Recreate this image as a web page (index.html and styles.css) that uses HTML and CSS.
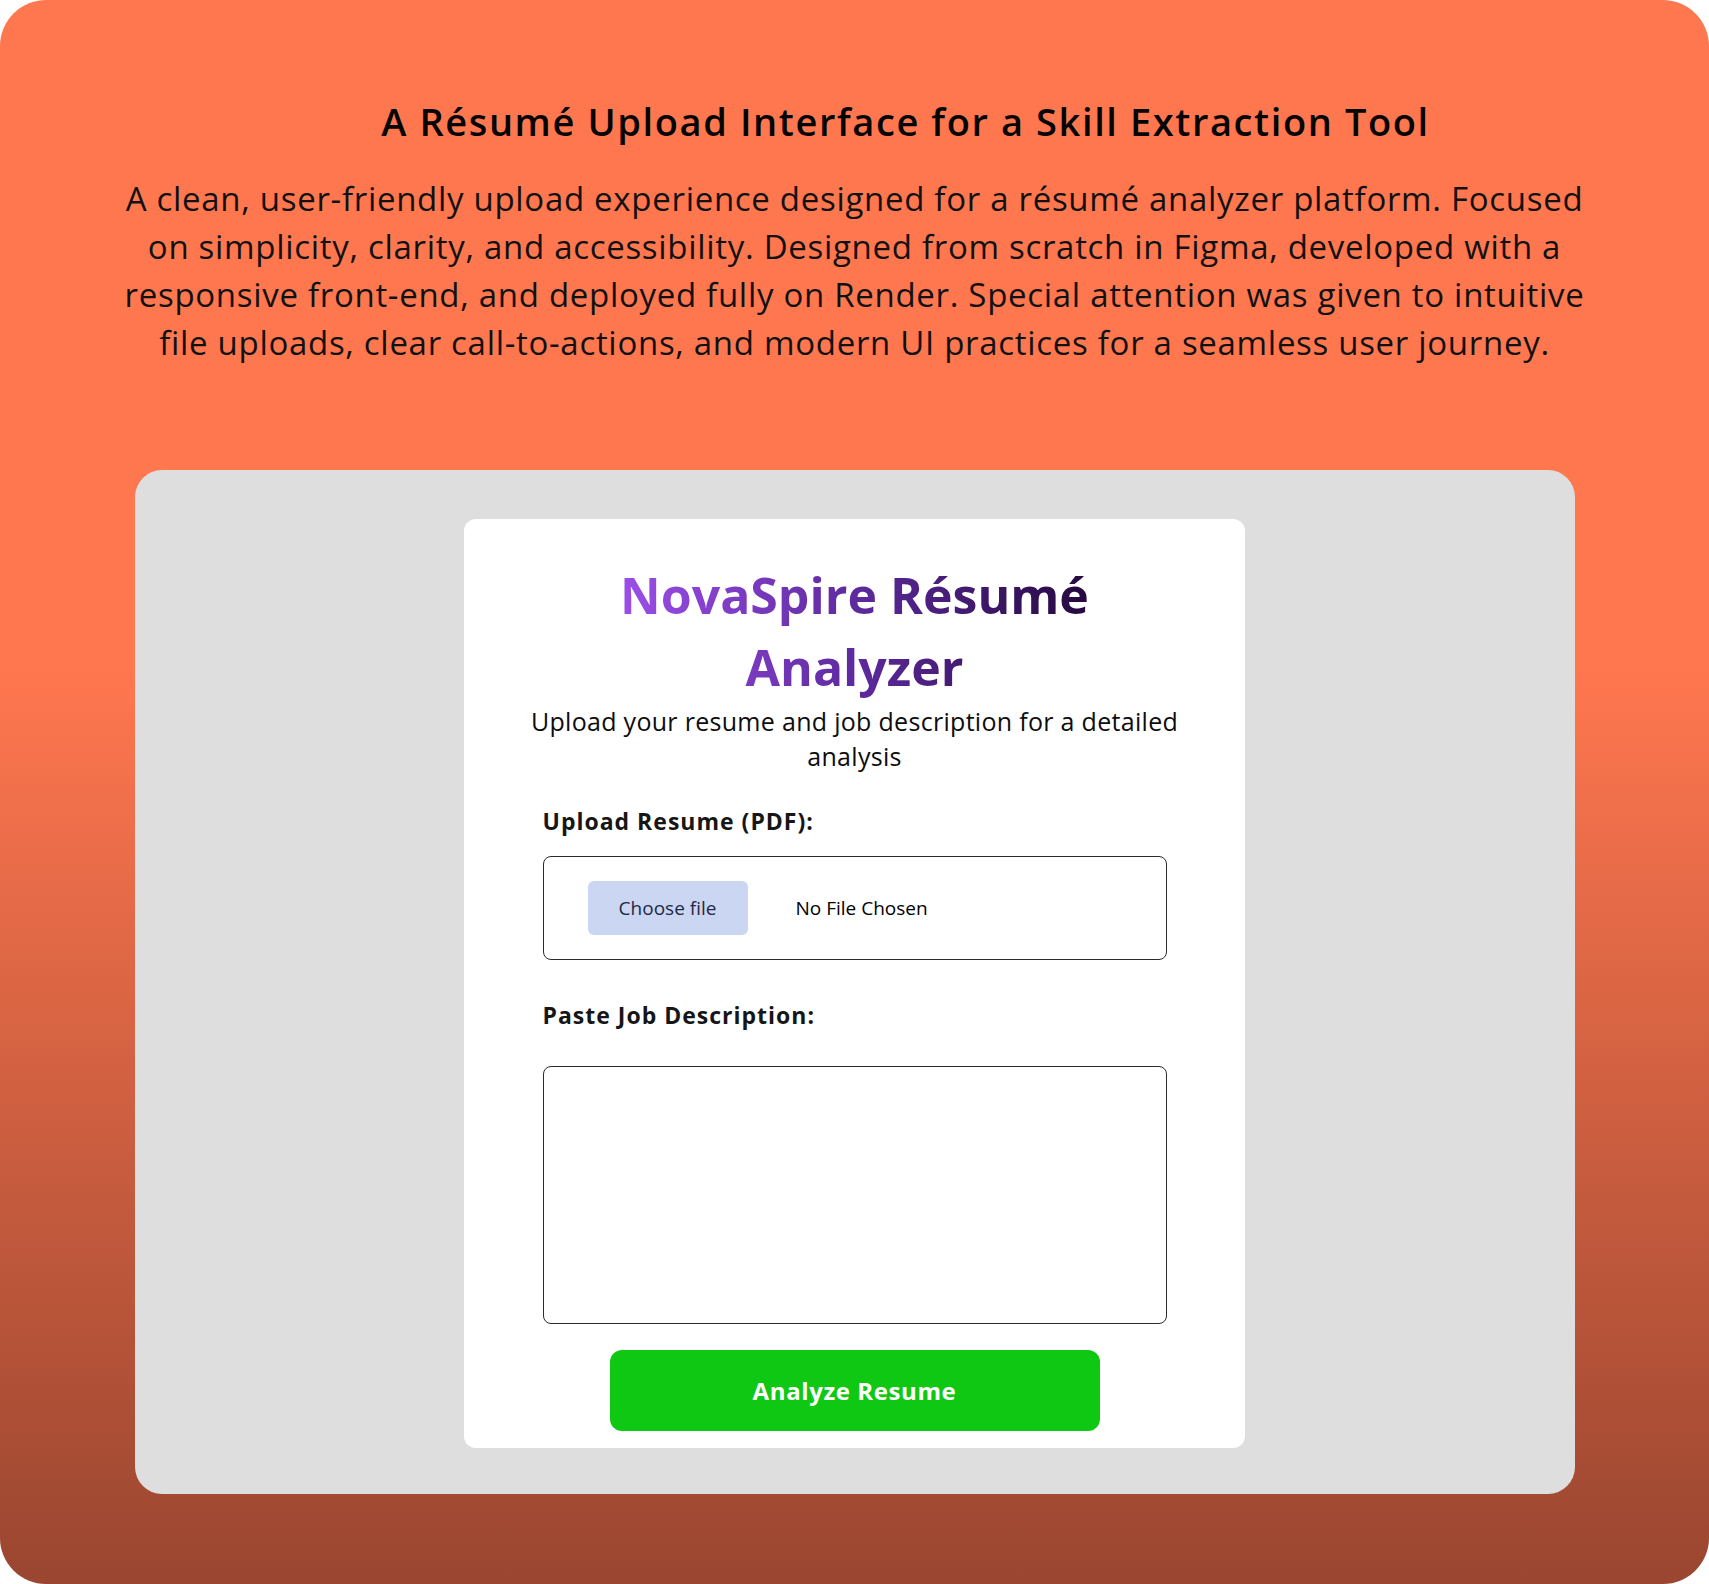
FILE: index.html
```html
<!DOCTYPE html>
<html lang="en">
<head>
<meta charset="utf-8">
<title>A Résumé Upload Interface for a Skill Extraction Tool</title>
<link rel="stylesheet" href="styles.css">
</head>
<body>
<main class="frame">
  <header class="intro">
    <h1 class="intro-title">A Résumé Upload Interface for a Skill Extraction Tool</h1>
    <p class="intro-text">A clean, user-friendly upload experience designed for a résumé analyzer platform. Focused<br>on simplicity, clarity, and accessibility. Designed from scratch in Figma, developed with a<br>responsive front-end, and deployed fully on Render. Special attention was given to intuitive<br>file uploads, clear call-to-actions, and modern UI practices for a seamless user journey.</p>
  </header>

  <section class="stage">
    <div class="card">
      <div class="card-head">
        <h2 class="brand">NovaSpire Résumé Analyzer</h2>
        <p class="lead">Upload your resume and job description for a detailed analysis</p>
      </div>

      <form class="form">
        <label class="field-label" for="resume">Upload Resume (PDF):</label>
        <div class="file-box">
          <span class="file-btn">Choose file</span>
          <span class="file-name">No File Chosen</span>
        </div>

        <label class="field-label field-label-jd" for="jd">Paste Job Description:</label>
        <textarea class="jd" id="jd"></textarea>

        <button type="button" class="submit">Analyze Resume</button>
      </form>
    </div>
  </section>
</main>
</body>
</html>
```

FILE: styles.css
```css
* { box-sizing: border-box; }

html, body {
  margin: 0;
  padding: 0;
  background: #ffffff;
}

body {
  font-family: "Open Sans", "DejaVu Sans", sans-serif;
  color: #111111;
}

.frame {
  width: 1709px;
  height: 1584px;
  border-radius: 46px;
  background: linear-gradient(to bottom, #ff774f 0%, #ff774f 42%, #9a4630 100%);
  padding-top: 94px;
  overflow: hidden;
}

.intro {
  text-align: center;
}

.intro-title {
  margin: 0;
  padding-left: 102px;
  font-size: 38px;
  line-height: 54px;
  font-weight: 600;
  letter-spacing: 1.6px;
  color: #050505;
}

.intro-text {
  margin: 27px 0 0;
  font-size: 33px;
  line-height: 48px;
  font-weight: 400;
  letter-spacing: 0.7px;
  color: #111111;
}

.stage {
  width: 1440px;
  margin: 103px auto 0;
  background: #dedede;
  border-radius: 27px;
  padding: 49px 0 46px;
}

.card {
  width: 781px;
  margin: 0 auto;
  background: #ffffff;
  border-radius: 12px;
  padding: 40px 0 17px;
}

.card-head {
  text-align: center;
  padding: 0 40px;
}

.brand {
  display: inline-block;
  width: 480px;
  margin: 0;
  font-size: 50px;
  line-height: 72px;
  font-weight: 700;
  background: linear-gradient(90deg, #9d4fea 0%, #5e2a9e 50%, #23083c 100%);
  -webkit-background-clip: text;
  background-clip: text;
  color: transparent;
}

.lead {
  margin: 1px 0 0;
  font-size: 25px;
  line-height: 35px;
  letter-spacing: 0.3px;
  color: #0d0d0d;
}

.form {
  width: 624px;
  margin: 32px auto 0;
  display: flex;
  flex-direction: column;
}

.field-label {
  font-size: 23px;
  line-height: 30px;
  font-weight: 700;
  letter-spacing: 1px;
  color: #161616;
}

.field-label-jd {
  margin-top: 40px;
}

.file-box {
  margin-top: 20px;
  height: 104px;
  border: 1px solid #2b2b2b;
  border-radius: 8px;
  display: flex;
  align-items: center;
  padding-left: 44px;
  gap: 48px;
}

.file-btn {
  width: 160px;
  height: 54px;
  border-radius: 6px;
  background: #cad6f2;
  color: #1f2a44;
  font-size: 19px;
  display: flex;
  align-items: center;
  justify-content: center;
}

.file-name {
  font-size: 19px;
  font-weight: 500;
  color: #000000;
}

.jd {
  margin-top: 36px;
  height: 258px;
  width: 100%;
  border: 1px solid #2b2b2b;
  border-radius: 8px;
  resize: none;
  background: #ffffff;
  font-family: inherit;
}

.submit {
  align-self: center;
  margin-top: 26px;
  width: 490px;
  height: 81px;
  border: 0;
  border-radius: 12px;
  background: #0fc814;
  color: #ffffff;
  font-family: inherit;
  font-size: 24px;
  font-weight: 700;
  letter-spacing: 0.6px;
}
```
